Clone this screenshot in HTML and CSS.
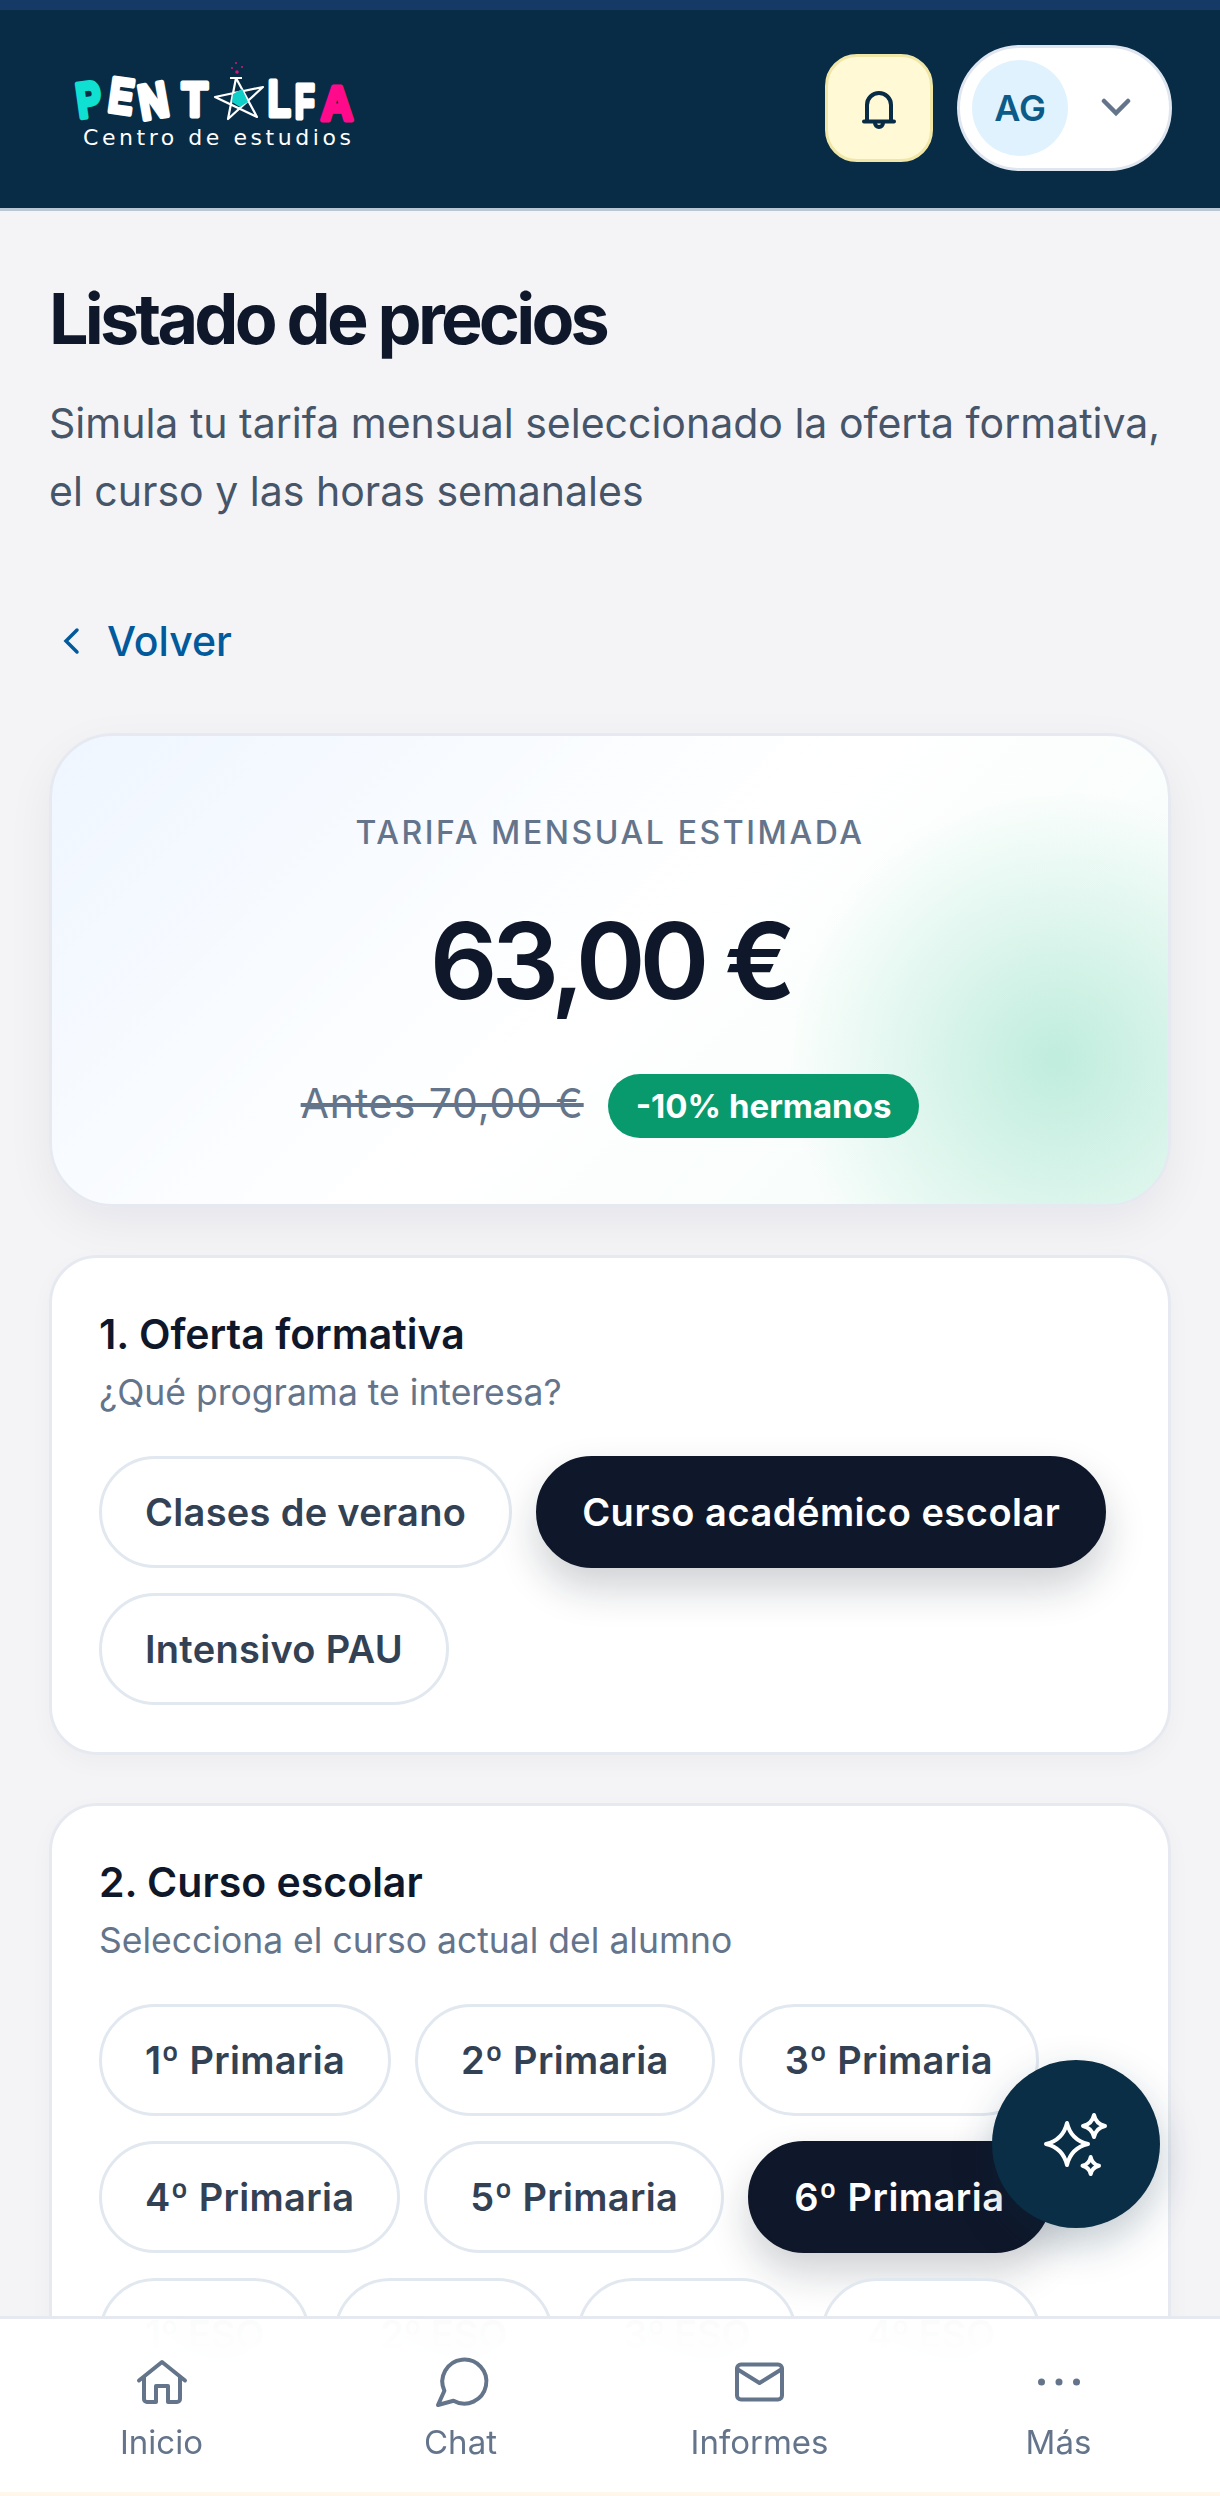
FILE: index.html
```html
<!DOCTYPE html>
<html lang="es">
  <head>
    <meta charset="UTF-8" />
    <meta name="viewport" content="width=device-width, initial-scale=1.0" />
    <title>Listado de precios</title>
    <link rel="stylesheet" href="styles.css">
  </head>
  <body>
    <div class="status-strip"></div>

    <header class="top-bar">
      <!-- Logo -->
      <svg class="logo" width="300" height="110" viewBox="0 0 300 110">
        <g class="logo-letters">
          <text class="logo-cyan" transform="translate(9 64) rotate(-8) scale(0.75 1)">P</text>
          <text transform="translate(37 57) rotate(8) scale(0.75 1)">E</text>
          <text transform="translate(72 66) rotate(-10) scale(0.82 1)">N</text>
          <text transform="translate(112 62) scale(0.85 1)">T</text>
          <text transform="translate(198 62) scale(0.75 1)">L</text>
          <text transform="translate(225 64) scale(0.65 1)">F</text>
          <text class="logo-pink" transform="translate(251 66) scale(0.9 1)">A</text>
        </g>
        <path class="logo-star" d="M166 24 L187 63 L145 43 L193 33 L158 65 Z M160 24 H172" />
        <path class="logo-flask" d="M163 40 L172 35 L178 48 L170 53 L162 48 Z" />
        <circle class="logo-dot" cx="167" cy="18" r="1.8" />
        <circle class="logo-dot" cx="162" cy="14" r="1.1" />
        <circle class="logo-dot" cx="172" cy="13" r="1.1" />
        <circle class="logo-dot" cx="166" cy="9" r="1.1" />
        <text class="logo-sub" x="13" y="91">Centro de estudios</text>
      </svg>

      <div class="top-actions">
        <button class="bell-btn">
          <svg width="48" height="48" viewBox="0 0 48 48">
            <path d="M12 37 V21 a12 12 0 0 1 24 0 V37 M9 37.5 H39 M20 39 a4 4 0 0 0 8 0" />
          </svg>
        </button>
        <div class="user-pill">
          <div class="avatar">AG</div>
          <svg class="user-chevron" width="32" height="20" viewBox="0 0 32 20">
            <path d="M4 3 L16 15 L28 3" />
          </svg>
        </div>
      </div>
    </header>

    <main class="page">
      <h1>Listado de precios</h1>
      <p class="lead">Simula tu tarifa mensual seleccionado la oferta formativa, el curso y las horas semanales</p>

      <a class="back-link" href="#">
        <svg width="24" height="36" viewBox="0 0 24 36">
          <path d="M19 7 L8 18 L19 29" />
        </svg>
        Volver
      </a>

      <section class="price-card">
        <div class="price-label">TARIFA MENSUAL ESTIMADA</div>
        <div class="price-value">63,00 €</div>
        <div class="price-row">
          <span class="price-old">Antes 70,00 €</span>
          <span class="price-badge">-10% hermanos</span>
        </div>
      </section>

      <section class="step-card">
        <h2>1. Oferta formativa</h2>
        <p class="step-hint">¿Qué programa te interesa?</p>
        <div class="pill-list">
          <button class="pill">Clases de verano</button>
          <button class="pill active">Curso académico escolar</button>
          <button class="pill">Intensivo PAU</button>
        </div>
      </section>

      <section class="step-card">
        <h2>2. Curso escolar</h2>
        <p class="step-hint">Selecciona el curso actual del alumno</p>
        <div class="pill-list">
          <button class="pill">1º Primaria</button>
          <button class="pill">2º Primaria</button>
          <button class="pill">3º Primaria</button>
          <button class="pill">4º Primaria</button>
          <button class="pill">5º Primaria</button>
          <button class="pill active">6º Primaria</button>
          <button class="pill pill-short">1º ESO</button>
          <button class="pill pill-short">2º ESO</button>
          <button class="pill pill-short">3º ESO</button>
          <button class="pill pill-short">4º ESO</button>
        </div>
      </section>
    </main>

    <!-- Floating assistant button -->
    <button class="fab">
      <svg width="80" height="80" viewBox="0 0 80 80">
        <path d="M31 19 Q35 36 52 40 Q35 44 31 61 Q27 44 10 40 Q27 36 31 19 Z" />
        <path d="M58 11 Q60 20 69 22 Q60 24 58 33 Q56 24 47 22 Q56 20 58 11 Z" />
        <path d="M54.7 53 Q56 60 63 61.7 Q56 63.4 54.7 70 Q53.4 63.4 46.5 61.7 Q53.4 60 54.7 53 Z" />
      </svg>
    </button>

    <nav class="bottom-nav">
      <a class="nav-item" href="#">
        <svg width="60" height="60" viewBox="0 0 60 60">
          <path d="M7 27.5 L30 9 L53 27.5 M12 24 V46 a3 3 0 0 0 3 3 H24 V33 H36 V49 H45 a3 3 0 0 0 3 -3 V24" />
        </svg>
        Inicio
      </a>
      <a class="nav-item" href="#">
        <svg width="60" height="60" viewBox="0 0 60 60">
          <path d="M7 52 L13.4 37.8 A22 22 0 1 1 22.5 47.7 Z" />
        </svg>
        Chat
      </a>
      <a class="nav-item" href="#">
        <svg width="60" height="60" viewBox="0 0 60 60">
          <rect x="7" y="11.5" width="45" height="35" rx="4" />
          <path d="M7 16 L29.5 30 L52 16" />
        </svg>
        Informes
      </a>
      <a class="nav-item" href="#">
        <svg width="60" height="60" viewBox="0 0 60 60">
          <circle class="nav-dot" cx="12.5" cy="29" r="3.5" />
          <circle class="nav-dot" cx="30" cy="29" r="3.5" />
          <circle class="nav-dot" cx="47.5" cy="29" r="3.5" />
        </svg>
        Más
      </a>
    </nav>
    <div class="home-strip"></div>
  </body>
</html>
```

FILE: styles.css
```css
* {
  box-sizing: border-box;
}

html,
body {
  height: 100%;
}

body {
  margin: 0;
  overflow: hidden;
  background-color: #f4f4f7;
  font-family: Inter, "Noto Sans", sans-serif;
  color: #0f172a;
}

button {
  font-family: inherit;
  cursor: pointer;
}

a {
  text-decoration: none;
}

.status-strip {
  height: 10px;
  background-color: #163a66;
}

/* Header */
.top-bar {
  height: 201px;
  display: flex;
  align-items: center;
  justify-content: space-between;
  padding: 0 48px 3px 70px;
  background-color: #082c45;
  border-bottom: 3px solid #b9c6d3;
}

.logo {
  display: block;
  margin-top: 2px;
}

.logo-letters text {
  font-family: "Liberation Sans", sans-serif;
  font-weight: 700;
  font-size: 49px;
  fill: #fff;
  stroke: #fff;
  stroke-width: 5px;
  stroke-linejoin: round;
}

.logo-letters .logo-cyan {
  fill: #0fe0d2;
  stroke: #0fe0d2;
}

.logo-letters .logo-pink {
  fill: #ff0a8a;
  stroke: #ff0a8a;
}

.logo-star {
  fill: none;
  stroke: #fff;
  stroke-width: 2.2;
  stroke-linejoin: round;
}

.logo-flask {
  fill: #0fd0c8;
}

.logo-dot {
  fill: #c8177f;
}

.logo-sub {
  font-family: "DejaVu Sans", sans-serif;
  font-size: 22px;
  letter-spacing: 3.55px;
  fill: #fff;
}

.top-actions {
  display: flex;
  align-items: center;
  gap: 24px;
}

.bell-btn {
  width: 108px;
  height: 108px;
  padding: 0;
  display: flex;
  align-items: center;
  justify-content: center;
  background-color: #fff9d6;
  border: 3px solid #f0e6a6;
  border-radius: 32px;
}

.bell-btn path {
  fill: none;
  stroke: #082c45;
  stroke-width: 4;
  stroke-linecap: round;
}

.user-pill {
  width: 215px;
  height: 126px;
  display: flex;
  align-items: center;
  padding-left: 12px;
  background-color: #fff;
  border: 3px solid #dfe6ef;
  border-radius: 63px;
}

.avatar {
  width: 96px;
  height: 96px;
  display: flex;
  align-items: center;
  justify-content: center;
  background-color: #e0f2fe;
  border-radius: 50%;
  font-size: 36px;
  font-weight: 600;
  color: #0c5a88;
}

.user-chevron {
  margin-left: 32px;
}

.user-chevron path {
  fill: none;
  stroke: #64748b;
  stroke-width: 4.5;
  stroke-linecap: round;
}

/* Page */
.page {
  padding: 66px 49px 0;
}

h1 {
  margin: 0;
  font-size: 70px;
  line-height: 84px;
  font-weight: 700;
  letter-spacing: -3.8px;
  color: #0f172a;
}

.lead {
  margin: 28px 0 0;
  font-size: 41px;
  line-height: 68px;
  color: #475569;
}

.back-link {
  display: flex;
  align-items: center;
  gap: 25px;
  margin-top: 88px;
  padding-left: 9px;
  font-size: 41px;
  line-height: 56px;
  font-weight: 500;
  color: #005a9c;
}

.back-link path {
  fill: none;
  stroke: #005a9c;
  stroke-width: 3.5;
  stroke-linecap: round;
}

.price-card {
  height: 474px;
  margin-top: 64px;
  padding-top: 75px;
  text-align: center;
  border: 3px solid #e6eaf0;
  border-radius: 64px;
  background:
    radial-gradient(circle 270px at 90% 69%, rgba(16, 185, 129, 0.24), rgba(16, 185, 129, 0)),
    linear-gradient(135deg, #eff6ff 0%, #fff 50%, #f3fcf8 100%);
  box-shadow: 0 16px 48px rgba(15, 23, 42, 0.06);
}

.price-label {
  font-size: 32px;
  line-height: 44px;
  font-weight: 500;
  letter-spacing: 2.6px;
  color: #64748b;
}

.price-value {
  margin-top: 44px;
  font-size: 106px;
  line-height: 124px;
  font-weight: 600;
  letter-spacing: -6px;
  color: #0f172a;
}

.price-row {
  display: flex;
  align-items: center;
  justify-content: center;
  gap: 24px;
  margin-top: 45px;
}

.price-old {
  font-size: 41px;
  letter-spacing: 0.9px;
  color: #64748b;
  text-decoration: line-through;
}

.price-badge {
  height: 64px;
  margin-top: 6px;
  display: flex;
  align-items: center;
  padding: 0 28px;
  border-radius: 32px;
  background-color: #089a6c;
  color: #fff;
  font-size: 33px;
  font-weight: 700;
}

.step-card {
  margin-top: 48px;
  padding: 47px 47px;
  background-color: #fff;
  border: 3px solid #e6eaf0;
  border-radius: 48px;
  box-shadow: 0 8px 24px rgba(15, 23, 42, 0.03);
}

h2 {
  margin: 0;
  font-size: 41px;
  line-height: 58px;
  font-weight: 600;
  color: #0f172a;
}

.step-hint {
  margin: 5px 0 0;
  font-size: 35.5px;
  line-height: 50px;
  color: #64748b;
}

.pill-list {
  display: flex;
  flex-wrap: wrap;
  gap: 25px 24px;
  margin-top: 38px;
}

.pill {
  height: 112px;
  padding: 0 43px;
  background-color: #fff;
  border: 3px solid #e2e8f0;
  border-radius: 56px;
  font-size: 38px;
  font-weight: 600;
  letter-spacing: 0.3px;
  color: #334155;
}

.pill.pill-short {
  letter-spacing: -0.2px;
}

.pill.active {
  background-color: #0f172a;
  border-color: #0f172a;
  color: #fff;
  letter-spacing: 0.5px;
  box-shadow: 0 20px 40px rgba(15, 23, 42, 0.2);
}

/* Floating button */
.fab {
  position: fixed;
  right: 60px;
  bottom: 268px;
  width: 168px;
  height: 168px;
  padding: 0;
  display: flex;
  align-items: center;
  justify-content: center;
  background-color: #0a2e45;
  border: none;
  border-radius: 50%;
  box-shadow: 0 16px 40px rgba(8, 44, 69, 0.25);
}

.fab path {
  fill: none;
  stroke: #fff;
  stroke-width: 4;
  stroke-linejoin: round;
}

/* Bottom navigation */
.bottom-nav {
  position: fixed;
  left: 0;
  right: 0;
  bottom: 4px;
  height: 176px;
  display: grid;
  grid-template-columns: repeat(4, 1fr);
  padding: 34px 12px 0;
  background-color: rgba(255, 255, 255, 0.96);
  backdrop-filter: blur(24px);
  border-top: 3px solid #e6eaf0;
}

.nav-item {
  display: flex;
  flex-direction: column;
  align-items: center;
  font-size: 33px;
  line-height: 46px;
  color: #64748b;
}

.nav-item svg {
  margin-bottom: 6px;
}

.nav-item path,
.nav-item rect {
  fill: none;
  stroke: #64748b;
  stroke-width: 4;
  stroke-linecap: round;
  stroke-linejoin: round;
}

.nav-item .nav-dot {
  fill: #64748b;
}

.home-strip {
  position: fixed;
  left: 0;
  right: 0;
  bottom: 0;
  height: 4px;
  background-color: #fff7ea;
}
```
